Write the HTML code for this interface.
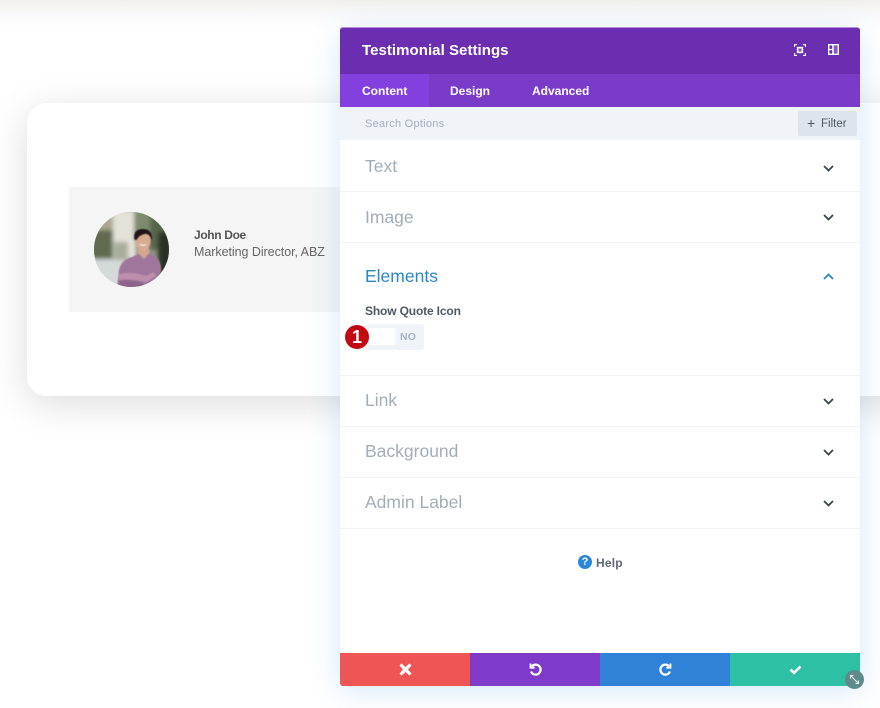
<!DOCTYPE html>
<html><head><meta charset="utf-8">
<style>
html,body{margin:0;padding:0}
body{width:880px;height:708px;overflow:hidden;background:#fff;position:relative;font-family:"Liberation Sans",sans-serif}
.abs,.abs *{box-sizing:border-box}
.abs{position:absolute}
.top{left:0;top:0;width:880px;height:28px;background:linear-gradient(#f0efee 0,#f5f5f4 8px,#fafafb 17px,#fff 28px)}
.card{left:27px;top:103px;width:900px;height:293px;background:#fff;border-radius:20px;box-shadow:0 8px 40px rgba(0,0,0,.14)}
.test{left:69px;top:187px;width:280px;height:125px;background:#f5f5f5}
.av{left:94px;top:212px;width:75px;height:75px;border-radius:50%;overflow:hidden}
.name{left:194px;top:228px;font-size:12px;font-weight:bold;color:#555;letter-spacing:-.35px;white-space:nowrap}
.role{left:194px;top:245px;font-size:12.5px;color:#666;letter-spacing:-.05px;white-space:nowrap}
.panel{left:340px;top:27px;width:520px;height:659px;background:#fff;border-radius:3px;box-shadow:0 5px 30px rgba(43,135,218,.2)}
.hd{left:0;top:0;width:520px;height:47px;background:#6c2eb0;border-radius:3px 3px 0 0;border-top:1px solid #b98ad8}
.title{left:22px;top:14px;font-size:15px;font-weight:bold;color:#fff;white-space:nowrap;letter-spacing:.05px}
.tabs{left:0;top:47px;width:520px;height:33px;background:#7a3bc8}
.tab{top:0;height:33px;line-height:34px;font-size:12px;font-weight:bold;color:#fff;white-space:nowrap}
.search{left:0;top:80px;width:520px;height:33px;background:#f0f4f9}
.sp{left:25px;top:11px;font-size:11px;color:#a3adb9;letter-spacing:.25px;white-space:nowrap}
.filter{left:458px;top:4px;width:59px;height:25px;background:#dde4eb;border-radius:2px;color:#4c5866;font-size:11.5px;line-height:26px;white-space:nowrap}
.row{left:0;width:520px;border-bottom:1px solid #f2f4f6}
.lbl{left:25px;font-size:17.5px;color:#a3adb9;white-space:nowrap}
.chev{left:482px;width:13px;height:9px}
.sq{left:25px;top:277px;font-size:12px;font-weight:bold;color:#4c5866;letter-spacing:-.15px;white-space:nowrap}
.tog{left:25px;top:297px;width:59px;height:26px;background:#f0f4f9;border-radius:3px}
.knob{left:4px;top:4px;width:26px;height:17px;background:#fff;border-radius:2px}
.no{left:35px;top:7px;font-size:10.5px;font-weight:bold;color:#a3b3c5;letter-spacing:.2px}
.badge{left:5px;top:298px;width:24px;height:24px;border-radius:50%;background:#c30a10;color:#fff;text-align:center;font-size:18px;font-weight:bold;line-height:24px}
.help{left:256px;top:529px;font-size:12px;font-weight:bold;color:#5f6975;white-space:nowrap;letter-spacing:.2px}
.q{left:238px;top:528px;width:14px;height:14px;border-radius:50%;background:#2b87da;color:#fff;font-size:11px;font-weight:bold;text-align:center;line-height:14px}
.btn{top:626px;width:130px;height:33px}
.btn svg{position:absolute;left:58px;top:9px;width:15px;height:15px}
.res{left:845px;top:670px;width:19px;height:19px;border-radius:50%;background:#5e8a8c}
</style></head><body>
<div class="abs top"></div>
<div class="abs card"></div>
<div class="abs test"></div>
<div class="abs av">
<svg width="75" height="75" viewBox="0 0 75 75">
<defs><filter id="b"><feGaussianBlur stdDeviation="2.2"/></filter><filter id="c"><feGaussianBlur stdDeviation=".5"/></filter></defs>
<rect width="75" height="75" fill="#8d9684"/>
<g filter="url(#b)">
<rect x="-2" y="-2" width="24" height="22" fill="#a9a78f"/>
<rect x="-2" y="18" width="24" height="32" fill="#5f6a50"/>
<rect x="19" y="-2" width="23" height="50" fill="#e4e1d9"/>
<rect x="40" y="-2" width="20" height="30" fill="#7f8a70"/>
<rect x="56" y="-2" width="22" height="40" fill="#56654a"/>
<rect x="64" y="20" width="14" height="50" fill="#2a3027"/>
<rect x="-2" y="47" width="34" height="30" fill="#d3dad8"/>
<rect x="20" y="30" width="14" height="18" fill="#a8ad98"/>
</g>
<g filter="url(#c)">
<path d="M23 76L25 58Q27 48 38 45L44 42L56 42L62 45Q68 50 67 60L62 76Z" fill="#a1769c"/>
<path d="M25 62Q38 59 52 64L60 60L62 64L52 70Q38 66 25 68Z" fill="#bd8fac"/>
<path d="M25 69Q38 67 50 72L50 76H25Z" fill="#8d6489"/>
<path d="M43 40L50 47L56 40L54 35H45Z" fill="#d2a58e"/>
<ellipse cx="49" cy="29" rx="7.500" ry="9.500" fill="#d8ab90"/>
<path d="M40.500 28Q38.500 17 49 17Q59 17 58 29Q56.500 23 52 22Q45 23 43 28Z" fill="#20181a"/>
<path d="M44.500 32Q49 35.500 53.500 32Q49 33.500 44.500 32Z" fill="#fff"/>
</g>
</svg>
</div>
<div class="abs name">John Doe</div>
<div class="abs role">Marketing Director, ABZ</div>

<div class="abs panel">
 <div class="abs hd">
  <div class="abs title">Testimonial Settings</div>
  <svg class="abs" style="left:454px;top:16px" width="12" height="12" viewBox="0 0 12 12" fill="none" stroke="#fff" stroke-width="1.1"><path d="M.6 3V.6H3M9 .6h2.400V3M11.400 9v2.400H9M3 11.400H.6V9"/><rect x="3.600" y="3.600" width="4.800" height="4.800" fill="#fff" fill-opacity=".25" stroke-width="1.500"/></svg>
  <svg class="abs" style="left:488px;top:16px" width="11" height="11" viewBox="0 0 11 11" fill="none" stroke="#fff"><rect x=".7" y=".7" width="9.600" height="9.600" stroke-width="1.400"/><path d="M5 .7v9.600" stroke-width="1.600"/><path d="M1 5.500h3.500" stroke-width="1.300"/><path d="M6 1.500h3.500v8H6z" fill="#fff" fill-opacity=".2" stroke="none"/></svg>
 </div>
 <div class="abs tabs">
  <div class="abs tab" style="left:0;width:89px;background:#8440de;padding-left:22px">Content</div>
  <div class="abs tab" style="left:110px">Design</div>
  <div class="abs tab" style="left:192px">Advanced</div>
 </div>
 <div class="abs search">
  <div class="abs sp">Search Options</div>
  <div class="abs filter"><span class="abs" style="left:9px;font-size:14px;top:-1px">+</span><span class="abs" style="left:23px">Filter</span></div>
 </div>

 <div class="abs row" style="top:113px;height:52px"></div>
 <div class="abs row" style="top:165px;height:51px"></div>
 <div class="abs row" style="top:216px;height:133px"></div>
 <div class="abs row" style="top:349px;height:51px"></div>
 <div class="abs row" style="top:400px;height:51px"></div>
 <div class="abs row" style="top:451px;height:51px"></div>

 <div class="abs lbl" style="top:129px">Text</div>
 <div class="abs lbl" style="top:180px">Image</div>
 <div class="abs lbl" style="top:239px;color:#2b87c0">Elements</div>
 <div class="abs lbl" style="top:363px">Link</div>
 <div class="abs lbl" style="top:414px">Background</div>
 <div class="abs lbl" style="top:465px">Admin Label</div>

 <svg class="abs chev" style="top:137px" viewBox="0 0 13 9" fill="none" stroke="#3a4450" stroke-width="1.800"><path d="M2 2l4.500 4.500L11 2"/></svg>
 <svg class="abs chev" style="top:186px" viewBox="0 0 13 9" fill="none" stroke="#3a4450" stroke-width="1.800"><path d="M2 2l4.500 4.500L11 2"/></svg>
 <svg class="abs chev" style="top:245px" viewBox="0 0 13 9" fill="none" stroke="#2b87c0" stroke-width="1.800"><path d="M2 7l4.500-4.500L11 7"/></svg>
 <svg class="abs chev" style="top:370px" viewBox="0 0 13 9" fill="none" stroke="#3a4450" stroke-width="1.800"><path d="M2 2l4.500 4.500L11 2"/></svg>
 <svg class="abs chev" style="top:421px" viewBox="0 0 13 9" fill="none" stroke="#3a4450" stroke-width="1.800"><path d="M2 2l4.500 4.500L11 2"/></svg>
 <svg class="abs chev" style="top:472px" viewBox="0 0 13 9" fill="none" stroke="#3a4450" stroke-width="1.800"><path d="M2 2l4.500 4.500L11 2"/></svg>

 <div class="abs sq">Show Quote Icon</div>
 <div class="abs tog"><div class="abs knob"></div><div class="abs no">NO</div></div>
 <div class="abs badge">1</div>

 <div class="abs q">?</div>
 <div class="abs help">Help</div>

 <div class="abs btn" style="left:0;background:#ef5555;border-radius:0 0 0 3px">
  <svg viewBox="0 0 15 15"><path d="M3.500 1.500l4 3.500 4-3.500 2 2-3.500 4 3.500 4-2 2-4-3.500-4 3.500-2-2 3.500-4-3.500-4z" fill="#fff"/></svg></div>
 <div class="abs btn" style="left:130px;background:#7e3bc9">
  <svg viewBox="0 0 15 15" fill="none" stroke="#fff" stroke-width="2.200"><path d="M3.800 4.400A5 5 0 1 1 3 9.500"/><path d="M2.500 1.500v4.200h4.200" stroke-width="1.800"/></svg></div>
 <div class="abs btn" style="left:260px;background:#2f82d8">
  <svg viewBox="0 0 15 15" fill="none" stroke="#fff" stroke-width="2.200"><path d="M11.200 4.400A5 5 0 1 0 12 9.500"/><path d="M12.500 1.500v4.200H8.300" stroke-width="1.800"/></svg></div>
 <div class="abs btn" style="left:390px;background:#2dc0a4;border-radius:0 0 3px 0">
  <svg viewBox="0 0 15 15" fill="none" stroke="#fff" stroke-width="2.600"><path d="M2.500 7.500l3.500 3.300 6.500-6.300"/></svg></div>
</div>
<div class="abs res"><svg width="19" height="19" viewBox="0 0 19 19" fill="none" stroke="#dfeaea" stroke-width="1.200"><path d="M5.500 5.500l8 8M5.500 8.500v-3h3M13.500 10.500v3h-3"/></svg></div>
</body></html>
